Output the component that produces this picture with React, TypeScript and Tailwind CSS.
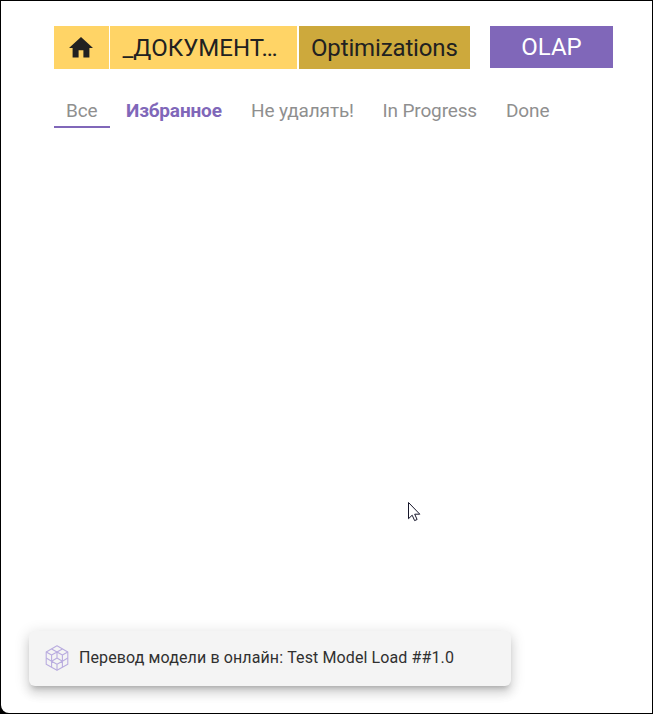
import React from "react";

type Tab = { label: string; className: string };

const tabs: Tab[] = [
  { label: "Все", className: "w-14 pl-3 border-[#8067b9] text-[#8f8f8f]" },
  { label: "Избранное", className: "ml-4 w-[97px] border-transparent font-bold text-[#8067b9]" },
  { label: "Не удалять!", className: "ml-7 w-[104px] border-transparent text-[#8f8f8f]" },
  { label: "In Progress", className: "ml-[27.5px] w-[95px] border-transparent text-[#8f8f8f]" },
  { label: "Done", className: "ml-[28.5px] w-[60px] border-transparent text-[#8f8f8f]" },
];

function HomeIcon() {
  return (
    <svg viewBox="0 0 24 21" className="h-[21px] w-6" fill="#212121">
      <path d="M9.6 20.5v-7.2h4.8v7.2h6v-9.6H24L12 0 0 10.9h3.6v9.6z" />
    </svg>
  );
}

function CubeIcon() {
  return (
    <svg viewBox="0 0 24 26" className="mb-px h-[26px] w-6 shrink-0" fill="none" stroke="#b9acdf" strokeWidth="1.1" strokeLinejoin="round">
      <path d="M12 .8 22.8 7v12.2L12 25.3 1.2 19.2V7z" />
      <path d="M6.6 3.9 12 7l5.4-3.1M1.2 7l5.4 3.1L12 7l5.4 3.1L22.8 7M6.6 10.1v12.2M17.4 10.1v12.2M1.2 13.1l5.4 3.1L12 13.1l5.4 3.1 5.4-3.1M12 7v6.1M6.6 16.2l5.4 3 5.4-3M12 19.2v6.1" />
    </svg>
  );
}

export default function App() {
  return (
    <main className="relative h-[714px] w-[653px] overflow-hidden bg-black p-px font-[Roboto,sans-serif]">
      <div className="flex h-full flex-col rounded-bl-lg bg-white">
        <header className="flex h-[68px] pt-[25px] pl-[53px] text-2xl text-[#212121]">
          <button className="flex h-[43px] w-[55px] items-center justify-center bg-[#ffd466] pr-px">
            <HomeIcon />
          </button>
          <button className="ml-px h-[43px] w-[187px] bg-[#ffd466] pl-[12.5px] text-left leading-[44px] tracking-[0.04px] whitespace-nowrap">_ДОКУМЕНТ…</button>
          <button className="ml-0.5 h-[43px] w-[171px] bg-[#cda93c] px-3 text-left leading-[44px] tracking-[-0.14px] whitespace-nowrap">Optimizations</button>
          <button className="ml-5 h-[42px] w-[123px] bg-[#8067b9] text-center leading-[42px] text-white">OLAP</button>
        </header>

        <nav className="mt-[27px] flex h-8 pl-[53px] text-[19px] leading-[30px] tracking-[-0.14px]">
          {tabs.map((tab) => (
            <button key={tab.label} className={`h-8 border-b-2 text-left whitespace-nowrap ${tab.className}`}>
              {tab.label}
            </button>
          ))}
        </nav>

        <div role="status" className="mt-auto mb-[27px] ml-7 flex h-[55px] w-[482px] items-center rounded-md bg-[#f4f4f4] pl-[15.5px] text-base text-[#303030] shadow-[0_5px_5px_-3px_rgba(0,0,0,0.2),0_8px_10px_1px_rgba(0,0,0,0.08),0_3px_14px_2px_rgba(0,0,0,0.12)]">
          <CubeIcon />
          <span className="mb-0.5 ml-[10.5px] tracking-[0.11px] whitespace-nowrap">Перевод модели в онлайн: Test Model Load ##1.0</span>
        </div>
      </div>

      <svg viewBox="0 0 13 20" className="absolute top-[502px] left-[408px] h-5 w-[13px]" fill="white" stroke="#16162a" strokeWidth="1">
        <path d="M.5.5v16.2l3.7-3.5 2.4 5.4 2.5-1.1-2.4-5.3h5.1z" />
      </svg>
    </main>
  );
}
